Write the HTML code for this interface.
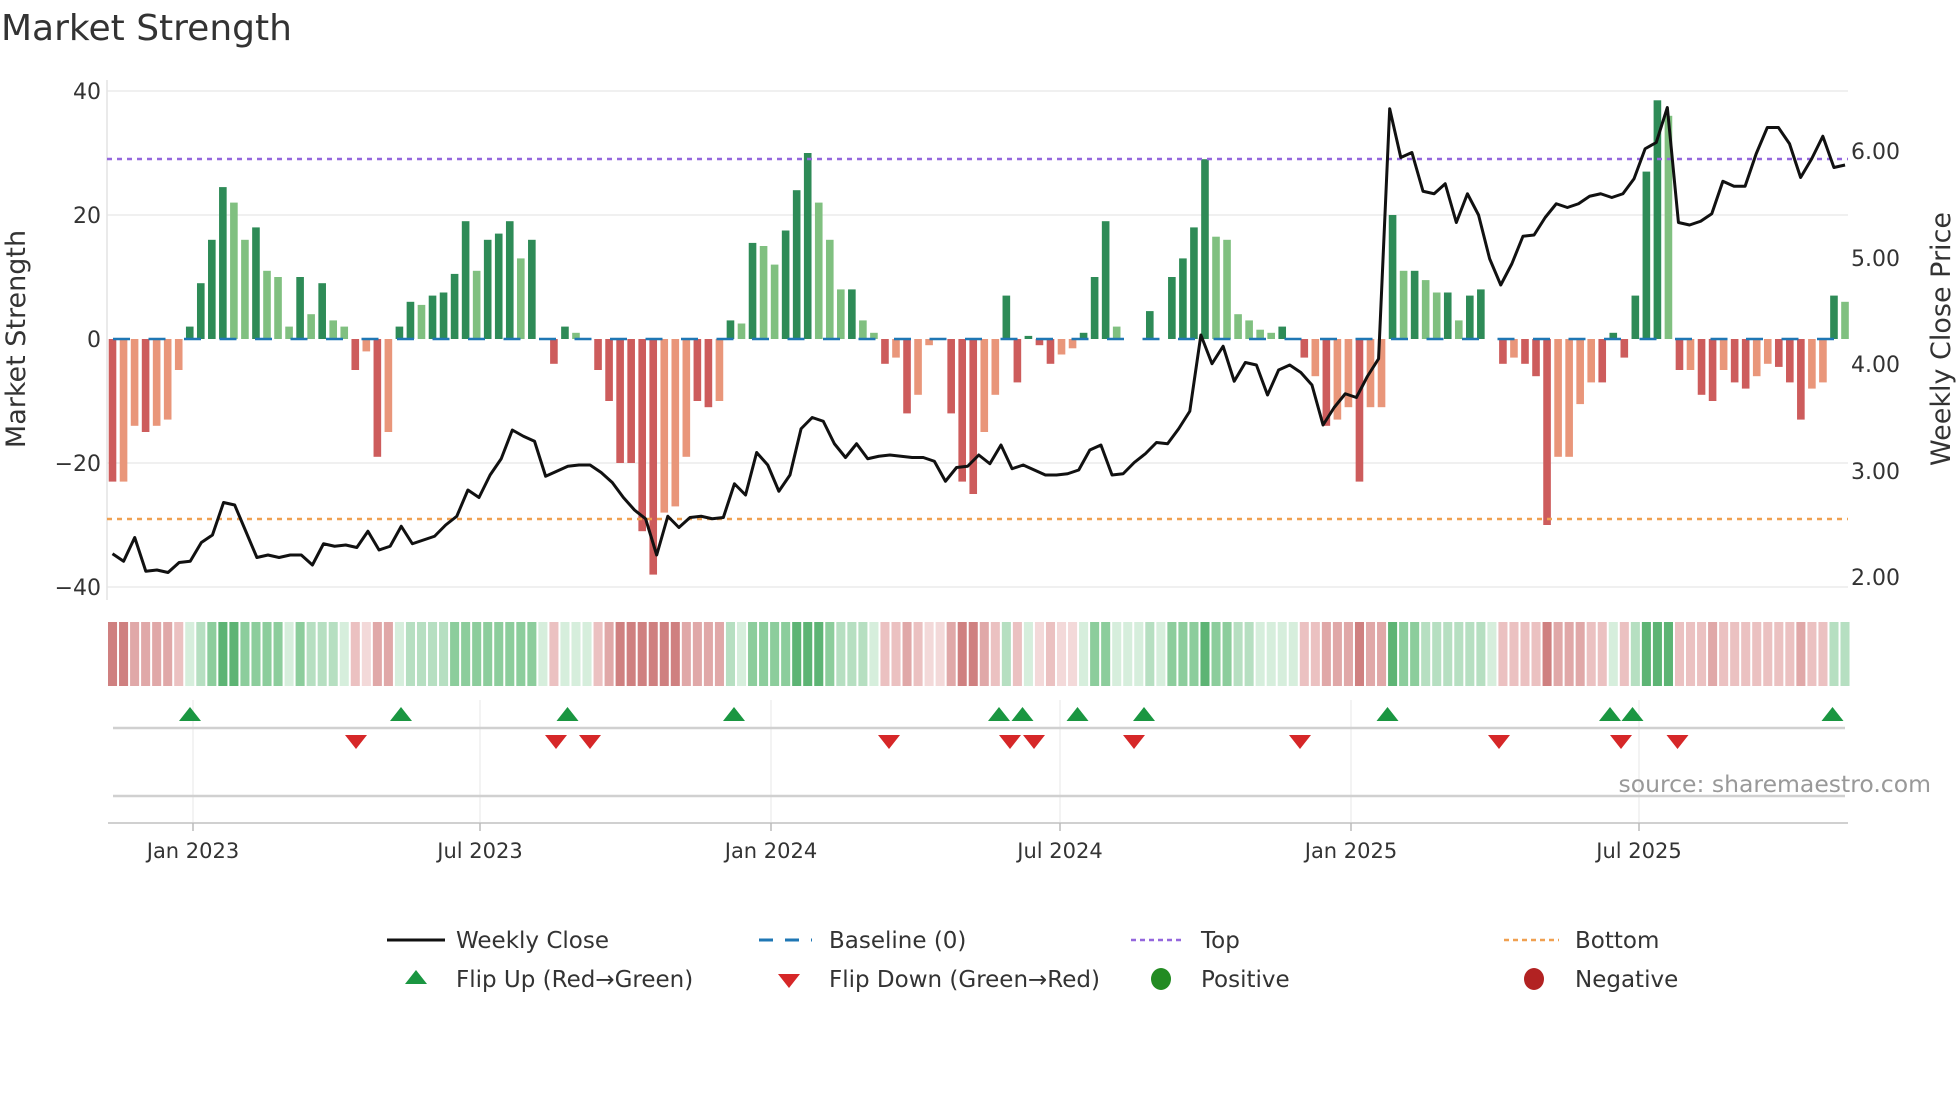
<!DOCTYPE html>
<html><head><meta charset="utf-8"><style>
html,body{margin:0;padding:0;background:#fff;}
svg{display:block;font-family:"DejaVu Sans","Liberation Sans",sans-serif;}
.a{fill:#2e8b57}.b{fill:#80c080}.c{fill:#cd5c5c}.e{fill:#e9967a}
.g1{fill:#d6eedc}.g2{fill:#b6dfc1}.g3{fill:#8ccd9c}.g4{fill:#5db474}
.r1{fill:#f3d9d9}.r2{fill:#ebc1c1}.r3{fill:#e0a8a8}.r4{fill:#cf8080}
</style></head><body>
<svg width="1960" height="1102" viewBox="0 0 1960 1102" xmlns="http://www.w3.org/2000/svg">
<defs>
<polygon id="up" points="0,-14 -11,0 11,0" fill="#1a9641"/>
<polygon id="dn" points="-11,0 11,0 0,14" fill="#d62728"/>
</defs>
<text x="1" y="40" font-size="36" fill="#333">Market Strength</text>
<g stroke="#ececec" stroke-width="1.5">
<line x1="107" y1="91" x2="1848" y2="91"/>
<line x1="107" y1="215" x2="1848" y2="215"/>
<line x1="107" y1="463" x2="1848" y2="463"/>
<line x1="107" y1="587" x2="1848" y2="587"/>
</g>
<line x1="107" y1="80" x2="107" y2="600" stroke="#e4e4e4" stroke-width="1.5"/>
<g font-size="22" fill="#333" text-anchor="end">
<text x="101" y="99">40</text><text x="101" y="223">20</text><text x="101" y="347">0</text>
<text x="101" y="471">−20</text><text x="101" y="595">−40</text>
</g>
<g font-size="22" fill="#333">
<text x="1851" y="159">6.00</text><text x="1851" y="266">5.00</text><text x="1851" y="372">4.00</text>
<text x="1851" y="479">3.00</text><text x="1851" y="585">2.00</text>
</g>
<text transform="translate(25,339) rotate(-90)" font-size="27" fill="#333" text-anchor="middle">Market Strength</text>
<text transform="translate(1950,339) rotate(-90)" font-size="27" fill="#333" text-anchor="middle">Weekly Close Price</text>

<g transform="translate(108.7,339) scale(11.035,-6.2)">
<rect x="0" y="-23" width="0.69" height="23" class="c"/>
<rect x="1" y="-23" width="0.69" height="23" class="e"/>
<rect x="2" y="-14" width="0.69" height="14" class="e"/>
<rect x="3" y="-15" width="0.69" height="15" class="c"/>
<rect x="4" y="-14" width="0.69" height="14" class="e"/>
<rect x="5" y="-13" width="0.69" height="13" class="e"/>
<rect x="6" y="-5" width="0.69" height="5" class="e"/>
<rect x="7" y="0" width="0.69" height="2" class="a"/>
<rect x="8" y="0" width="0.69" height="9" class="a"/>
<rect x="9" y="0" width="0.69" height="16" class="a"/>
<rect x="10" y="0" width="0.69" height="24.5" class="a"/>
<rect x="11" y="0" width="0.69" height="22" class="b"/>
<rect x="12" y="0" width="0.69" height="16" class="b"/>
<rect x="13" y="0" width="0.69" height="18" class="a"/>
<rect x="14" y="0" width="0.69" height="11" class="b"/>
<rect x="15" y="0" width="0.69" height="10" class="b"/>
<rect x="16" y="0" width="0.69" height="2" class="b"/>
<rect x="17" y="0" width="0.69" height="10" class="a"/>
<rect x="18" y="0" width="0.69" height="4" class="b"/>
<rect x="19" y="0" width="0.69" height="9" class="a"/>
<rect x="20" y="0" width="0.69" height="3" class="b"/>
<rect x="21" y="0" width="0.69" height="2" class="b"/>
<rect x="22" y="-5" width="0.69" height="5" class="c"/>
<rect x="23" y="-2" width="0.69" height="2" class="e"/>
<rect x="24" y="-19" width="0.69" height="19" class="c"/>
<rect x="25" y="-15" width="0.69" height="15" class="e"/>
<rect x="26" y="0" width="0.69" height="2" class="a"/>
<rect x="27" y="0" width="0.69" height="6" class="a"/>
<rect x="28" y="0" width="0.69" height="5.5" class="b"/>
<rect x="29" y="0" width="0.69" height="7" class="a"/>
<rect x="30" y="0" width="0.69" height="7.5" class="a"/>
<rect x="31" y="0" width="0.69" height="10.5" class="a"/>
<rect x="32" y="0" width="0.69" height="19" class="a"/>
<rect x="33" y="0" width="0.69" height="11" class="b"/>
<rect x="34" y="0" width="0.69" height="16" class="a"/>
<rect x="35" y="0" width="0.69" height="17" class="a"/>
<rect x="36" y="0" width="0.69" height="19" class="a"/>
<rect x="37" y="0" width="0.69" height="13" class="b"/>
<rect x="38" y="0" width="0.69" height="16" class="a"/>
<rect x="40" y="-4" width="0.69" height="4" class="c"/>
<rect x="41" y="0" width="0.69" height="2" class="a"/>
<rect x="42" y="0" width="0.69" height="1" class="b"/>
<rect x="44" y="-5" width="0.69" height="5" class="c"/>
<rect x="45" y="-10" width="0.69" height="10" class="c"/>
<rect x="46" y="-20" width="0.69" height="20" class="c"/>
<rect x="47" y="-20" width="0.69" height="20" class="c"/>
<rect x="48" y="-31" width="0.69" height="31" class="c"/>
<rect x="49" y="-38" width="0.69" height="38" class="c"/>
<rect x="50" y="-28" width="0.69" height="28" class="e"/>
<rect x="51" y="-27" width="0.69" height="27" class="e"/>
<rect x="52" y="-19" width="0.69" height="19" class="e"/>
<rect x="53" y="-10" width="0.69" height="10" class="c"/>
<rect x="54" y="-11" width="0.69" height="11" class="c"/>
<rect x="55" y="-10" width="0.69" height="10" class="e"/>
<rect x="56" y="0" width="0.69" height="3" class="a"/>
<rect x="57" y="0" width="0.69" height="2.5" class="b"/>
<rect x="58" y="0" width="0.69" height="15.5" class="a"/>
<rect x="59" y="0" width="0.69" height="15" class="b"/>
<rect x="60" y="0" width="0.69" height="12" class="b"/>
<rect x="61" y="0" width="0.69" height="17.5" class="a"/>
<rect x="62" y="0" width="0.69" height="24" class="a"/>
<rect x="63" y="0" width="0.69" height="30" class="a"/>
<rect x="64" y="0" width="0.69" height="22" class="b"/>
<rect x="65" y="0" width="0.69" height="16" class="b"/>
<rect x="66" y="0" width="0.69" height="8" class="b"/>
<rect x="67" y="0" width="0.69" height="8" class="a"/>
<rect x="68" y="0" width="0.69" height="3" class="b"/>
<rect x="69" y="0" width="0.69" height="1" class="b"/>
<rect x="70" y="-4" width="0.69" height="4" class="c"/>
<rect x="71" y="-3" width="0.69" height="3" class="e"/>
<rect x="72" y="-12" width="0.69" height="12" class="c"/>
<rect x="73" y="-9" width="0.69" height="9" class="e"/>
<rect x="74" y="-1" width="0.69" height="1" class="e"/>
<rect x="76" y="-12" width="0.69" height="12" class="c"/>
<rect x="77" y="-23" width="0.69" height="23" class="c"/>
<rect x="78" y="-25" width="0.69" height="25" class="c"/>
<rect x="79" y="-15" width="0.69" height="15" class="e"/>
<rect x="80" y="-9" width="0.69" height="9" class="e"/>
<rect x="81" y="0" width="0.69" height="7" class="a"/>
<rect x="82" y="-7" width="0.69" height="7" class="c"/>
<rect x="83" y="0" width="0.69" height="0.5" class="a"/>
<rect x="84" y="-1" width="0.69" height="1" class="c"/>
<rect x="85" y="-4" width="0.69" height="4" class="c"/>
<rect x="86" y="-2.5" width="0.69" height="2.5" class="e"/>
<rect x="87" y="-1.5" width="0.69" height="1.5" class="e"/>
<rect x="88" y="0" width="0.69" height="1" class="a"/>
<rect x="89" y="0" width="0.69" height="10" class="a"/>
<rect x="90" y="0" width="0.69" height="19" class="a"/>
<rect x="91" y="0" width="0.69" height="2" class="b"/>
<rect x="94" y="0" width="0.69" height="4.5" class="a"/>
<rect x="96" y="0" width="0.69" height="10" class="a"/>
<rect x="97" y="0" width="0.69" height="13" class="a"/>
<rect x="98" y="0" width="0.69" height="18" class="a"/>
<rect x="99" y="0" width="0.69" height="29" class="a"/>
<rect x="100" y="0" width="0.69" height="16.5" class="b"/>
<rect x="101" y="0" width="0.69" height="16" class="b"/>
<rect x="102" y="0" width="0.69" height="4" class="b"/>
<rect x="103" y="0" width="0.69" height="3" class="b"/>
<rect x="104" y="0" width="0.69" height="1.5" class="b"/>
<rect x="105" y="0" width="0.69" height="1" class="b"/>
<rect x="106" y="0" width="0.69" height="2" class="a"/>
<rect x="108" y="-3" width="0.69" height="3" class="c"/>
<rect x="109" y="-6" width="0.69" height="6" class="e"/>
<rect x="110" y="-14" width="0.69" height="14" class="c"/>
<rect x="111" y="-13" width="0.69" height="13" class="e"/>
<rect x="112" y="-11" width="0.69" height="11" class="e"/>
<rect x="113" y="-23" width="0.69" height="23" class="c"/>
<rect x="114" y="-11" width="0.69" height="11" class="e"/>
<rect x="115" y="-11" width="0.69" height="11" class="e"/>
<rect x="116" y="0" width="0.69" height="20" class="a"/>
<rect x="117" y="0" width="0.69" height="11" class="b"/>
<rect x="118" y="0" width="0.69" height="11" class="a"/>
<rect x="119" y="0" width="0.69" height="9.5" class="b"/>
<rect x="120" y="0" width="0.69" height="7.5" class="b"/>
<rect x="121" y="0" width="0.69" height="7.5" class="a"/>
<rect x="122" y="0" width="0.69" height="3" class="b"/>
<rect x="123" y="0" width="0.69" height="7" class="a"/>
<rect x="124" y="0" width="0.69" height="8" class="a"/>
<rect x="126" y="-4" width="0.69" height="4" class="c"/>
<rect x="127" y="-3" width="0.69" height="3" class="e"/>
<rect x="128" y="-4" width="0.69" height="4" class="c"/>
<rect x="129" y="-6" width="0.69" height="6" class="c"/>
<rect x="130" y="-30" width="0.69" height="30" class="c"/>
<rect x="131" y="-19" width="0.69" height="19" class="e"/>
<rect x="132" y="-19" width="0.69" height="19" class="e"/>
<rect x="133" y="-10.5" width="0.69" height="10.5" class="e"/>
<rect x="134" y="-7" width="0.69" height="7" class="e"/>
<rect x="135" y="-7" width="0.69" height="7" class="c"/>
<rect x="136" y="0" width="0.69" height="1" class="a"/>
<rect x="137" y="-3" width="0.69" height="3" class="c"/>
<rect x="138" y="0" width="0.69" height="7" class="a"/>
<rect x="139" y="0" width="0.69" height="27" class="a"/>
<rect x="140" y="0" width="0.69" height="38.5" class="a"/>
<rect x="141" y="0" width="0.69" height="36" class="b"/>
<rect x="142" y="-5" width="0.69" height="5" class="c"/>
<rect x="143" y="-5" width="0.69" height="5" class="e"/>
<rect x="144" y="-9" width="0.69" height="9" class="c"/>
<rect x="145" y="-10" width="0.69" height="10" class="c"/>
<rect x="146" y="-5" width="0.69" height="5" class="e"/>
<rect x="147" y="-7" width="0.69" height="7" class="c"/>
<rect x="148" y="-8" width="0.69" height="8" class="c"/>
<rect x="149" y="-6" width="0.69" height="6" class="e"/>
<rect x="150" y="-4" width="0.69" height="4" class="e"/>
<rect x="151" y="-4.5" width="0.69" height="4.5" class="c"/>
<rect x="152" y="-7" width="0.69" height="7" class="c"/>
<rect x="153" y="-13" width="0.69" height="13" class="c"/>
<rect x="154" y="-8" width="0.69" height="8" class="e"/>
<rect x="155" y="-7" width="0.69" height="7" class="e"/>
<rect x="156" y="0" width="0.69" height="7" class="a"/>
<rect x="157" y="0" width="0.69" height="6" class="b"/>
</g>

<line x1="107" y1="159" x2="1848" y2="159" stroke="#9467dd" stroke-width="2.5" stroke-dasharray="5,5"/>
<line x1="107" y1="519" x2="1848" y2="519" stroke="#f0a050" stroke-width="2.5" stroke-dasharray="5,5"/>
<line x1="113" y1="339" x2="1848" y2="339" stroke="#1f77b4" stroke-width="2.5" stroke-dasharray="17,18.5"/>

<g transform="translate(112.5,0) scale(11.106,1.25)">
<polyline fill="none" stroke="#111" stroke-width="3" stroke-linejoin="round" vector-effect="non-scaling-stroke" points="0,443 1,449 2,430 3,457 4,456 5,458 6,450 7,449 8,434 9,428 10,402 11,404 12,425 13,446 14,444 15,446 16,444 17,444 18,452 19,435 20,437 21,436 22,438 23,425 24,440 25,437 26,421 27,435 28,432 29,429 30,420 31,413 32,392 33,398 34,380 35,367 36,344 37,349 38,353 39,381 40,377 41,373 42,372 43,372 44,378 45,386 46,398 47,408 48,415 49,444 50,413 51,422 52,414 53,413 54,415 55,414 56,387 57,396 58,362 59,372 60,393 61,380 62,343 63,334 64,337 65,355 66,366 67,355 68,367 69,365 70,364 71,365 72,366 73,366 74,369 75,385 76,374 77,373 78,364 79,371 80,356 81,375 82,372 83,376 84,380 85,380 86,379 87,376 88,360 89,356 90,380 91,379 92,370 93,363 94,354 95,355 96,343 97,329 98,268 99,291 100,277 101,305 102,290 103,292 104,316 105,296 106,292 107,298 108,308 109,340 110,326 111,315 112,318 113,301 114,287 115,87 116,126 117,122 118,153 119,155 120,147 121,178 122,155 123,172 124,207 125,228 126,211 127,189 128,188 129,174 130,163 131,166 132,163 133,157 134,155 135,158 136,155 137,143 138,119 139,114 140,86 141,178 142,180 143,177 144,171 145,145 146,149 147,149 148,123 149,102 150,102 151,115 152,142 153,127 154,109 155,134 156,132"/>
</g>

<g transform="translate(108,622) scale(11.035,1)">
<rect x="0" width="0.82" height="64" class="r4"/><rect x="1" width="0.82" height="64" class="r4"/><rect x="2" width="0.82" height="64" class="r3"/><rect x="3" width="0.82" height="64" class="r3"/><rect x="4" width="0.82" height="64" class="r3"/><rect x="5" width="0.82" height="64" class="r3"/><rect x="6" width="0.82" height="64" class="r2"/><rect x="7" width="0.82" height="64" class="g1"/><rect x="8" width="0.82" height="64" class="g2"/><rect x="9" width="0.82" height="64" class="g3"/>
<rect x="10" width="0.82" height="64" class="g4"/><rect x="11" width="0.82" height="64" class="g4"/><rect x="12" width="0.82" height="64" class="g3"/><rect x="13" width="0.82" height="64" class="g3"/><rect x="14" width="0.82" height="64" class="g3"/><rect x="15" width="0.82" height="64" class="g3"/><rect x="16" width="0.82" height="64" class="g1"/><rect x="17" width="0.82" height="64" class="g3"/><rect x="18" width="0.82" height="64" class="g2"/><rect x="19" width="0.82" height="64" class="g2"/>
<rect x="20" width="0.82" height="64" class="g2"/><rect x="21" width="0.82" height="64" class="g1"/><rect x="22" width="0.82" height="64" class="r2"/><rect x="23" width="0.82" height="64" class="r1"/><rect x="24" width="0.82" height="64" class="r3"/><rect x="25" width="0.82" height="64" class="r3"/><rect x="26" width="0.82" height="64" class="g1"/><rect x="27" width="0.82" height="64" class="g2"/><rect x="28" width="0.82" height="64" class="g2"/><rect x="29" width="0.82" height="64" class="g2"/>
<rect x="30" width="0.82" height="64" class="g2"/><rect x="31" width="0.82" height="64" class="g3"/><rect x="32" width="0.82" height="64" class="g3"/><rect x="33" width="0.82" height="64" class="g3"/><rect x="34" width="0.82" height="64" class="g3"/><rect x="35" width="0.82" height="64" class="g3"/><rect x="36" width="0.82" height="64" class="g3"/><rect x="37" width="0.82" height="64" class="g3"/><rect x="38" width="0.82" height="64" class="g3"/><rect x="39" width="0.82" height="64" class="g1"/>
<rect x="40" width="0.82" height="64" class="r2"/><rect x="41" width="0.82" height="64" class="g1"/><rect x="42" width="0.82" height="64" class="g1"/><rect x="43" width="0.82" height="64" class="g1"/><rect x="44" width="0.82" height="64" class="r2"/><rect x="45" width="0.82" height="64" class="r3"/><rect x="46" width="0.82" height="64" class="r4"/><rect x="47" width="0.82" height="64" class="r4"/><rect x="48" width="0.82" height="64" class="r4"/><rect x="49" width="0.82" height="64" class="r4"/>
<rect x="50" width="0.82" height="64" class="r4"/><rect x="51" width="0.82" height="64" class="r4"/><rect x="52" width="0.82" height="64" class="r3"/><rect x="53" width="0.82" height="64" class="r3"/><rect x="54" width="0.82" height="64" class="r3"/><rect x="55" width="0.82" height="64" class="r3"/><rect x="56" width="0.82" height="64" class="g2"/><rect x="57" width="0.82" height="64" class="g1"/><rect x="58" width="0.82" height="64" class="g3"/><rect x="59" width="0.82" height="64" class="g3"/>
<rect x="60" width="0.82" height="64" class="g3"/><rect x="61" width="0.82" height="64" class="g3"/><rect x="62" width="0.82" height="64" class="g4"/><rect x="63" width="0.82" height="64" class="g4"/><rect x="64" width="0.82" height="64" class="g4"/><rect x="65" width="0.82" height="64" class="g3"/><rect x="66" width="0.82" height="64" class="g2"/><rect x="67" width="0.82" height="64" class="g2"/><rect x="68" width="0.82" height="64" class="g2"/><rect x="69" width="0.82" height="64" class="g1"/>
<rect x="70" width="0.82" height="64" class="r2"/><rect x="71" width="0.82" height="64" class="r2"/><rect x="72" width="0.82" height="64" class="r3"/><rect x="73" width="0.82" height="64" class="r2"/><rect x="74" width="0.82" height="64" class="r1"/><rect x="75" width="0.82" height="64" class="r1"/><rect x="76" width="0.82" height="64" class="r3"/><rect x="77" width="0.82" height="64" class="r4"/><rect x="78" width="0.82" height="64" class="r4"/><rect x="79" width="0.82" height="64" class="r3"/>
<rect x="80" width="0.82" height="64" class="r2"/><rect x="81" width="0.82" height="64" class="g2"/><rect x="82" width="0.82" height="64" class="r2"/><rect x="83" width="0.82" height="64" class="g1"/><rect x="84" width="0.82" height="64" class="r1"/><rect x="85" width="0.82" height="64" class="r2"/><rect x="86" width="0.82" height="64" class="r1"/><rect x="87" width="0.82" height="64" class="r1"/><rect x="88" width="0.82" height="64" class="g1"/><rect x="89" width="0.82" height="64" class="g3"/>
<rect x="90" width="0.82" height="64" class="g3"/><rect x="91" width="0.82" height="64" class="g1"/><rect x="92" width="0.82" height="64" class="g1"/><rect x="93" width="0.82" height="64" class="g1"/><rect x="94" width="0.82" height="64" class="g2"/><rect x="95" width="0.82" height="64" class="g1"/><rect x="96" width="0.82" height="64" class="g3"/><rect x="97" width="0.82" height="64" class="g3"/><rect x="98" width="0.82" height="64" class="g3"/><rect x="99" width="0.82" height="64" class="g4"/>
<rect x="100" width="0.82" height="64" class="g3"/><rect x="101" width="0.82" height="64" class="g3"/><rect x="102" width="0.82" height="64" class="g2"/><rect x="103" width="0.82" height="64" class="g2"/><rect x="104" width="0.82" height="64" class="g1"/><rect x="105" width="0.82" height="64" class="g1"/><rect x="106" width="0.82" height="64" class="g1"/><rect x="107" width="0.82" height="64" class="g1"/><rect x="108" width="0.82" height="64" class="r2"/><rect x="109" width="0.82" height="64" class="r2"/>
<rect x="110" width="0.82" height="64" class="r3"/><rect x="111" width="0.82" height="64" class="r3"/><rect x="112" width="0.82" height="64" class="r3"/><rect x="113" width="0.82" height="64" class="r4"/><rect x="114" width="0.82" height="64" class="r3"/><rect x="115" width="0.82" height="64" class="r3"/><rect x="116" width="0.82" height="64" class="g4"/><rect x="117" width="0.82" height="64" class="g3"/><rect x="118" width="0.82" height="64" class="g3"/><rect x="119" width="0.82" height="64" class="g2"/>
<rect x="120" width="0.82" height="64" class="g2"/><rect x="121" width="0.82" height="64" class="g2"/><rect x="122" width="0.82" height="64" class="g2"/><rect x="123" width="0.82" height="64" class="g2"/><rect x="124" width="0.82" height="64" class="g2"/><rect x="125" width="0.82" height="64" class="g1"/><rect x="126" width="0.82" height="64" class="r2"/><rect x="127" width="0.82" height="64" class="r2"/><rect x="128" width="0.82" height="64" class="r2"/><rect x="129" width="0.82" height="64" class="r2"/>
<rect x="130" width="0.82" height="64" class="r4"/><rect x="131" width="0.82" height="64" class="r3"/><rect x="132" width="0.82" height="64" class="r3"/><rect x="133" width="0.82" height="64" class="r3"/><rect x="134" width="0.82" height="64" class="r2"/><rect x="135" width="0.82" height="64" class="r2"/><rect x="136" width="0.82" height="64" class="g1"/><rect x="137" width="0.82" height="64" class="r2"/><rect x="138" width="0.82" height="64" class="g2"/><rect x="139" width="0.82" height="64" class="g4"/>
<rect x="140" width="0.82" height="64" class="g4"/><rect x="141" width="0.82" height="64" class="g4"/><rect x="142" width="0.82" height="64" class="r2"/><rect x="143" width="0.82" height="64" class="r2"/><rect x="144" width="0.82" height="64" class="r2"/><rect x="145" width="0.82" height="64" class="r3"/><rect x="146" width="0.82" height="64" class="r2"/><rect x="147" width="0.82" height="64" class="r2"/><rect x="148" width="0.82" height="64" class="r2"/><rect x="149" width="0.82" height="64" class="r2"/>
<rect x="150" width="0.82" height="64" class="r2"/><rect x="151" width="0.82" height="64" class="r2"/><rect x="152" width="0.82" height="64" class="r2"/><rect x="153" width="0.82" height="64" class="r3"/><rect x="154" width="0.82" height="64" class="r2"/><rect x="155" width="0.82" height="64" class="r2"/><rect x="156" width="0.82" height="64" class="g2"/><rect x="157" width="0.82" height="64" class="g2"/>
</g>

<g stroke="#efefef" stroke-width="1.5">
<line x1="193" y1="700" x2="193" y2="823"/><line x1="480" y1="700" x2="480" y2="823"/>
<line x1="771" y1="700" x2="771" y2="823"/><line x1="1060" y1="700" x2="1060" y2="823"/>
<line x1="1351" y1="700" x2="1351" y2="823"/><line x1="1639" y1="700" x2="1639" y2="823"/>
</g>
<line x1="113" y1="728" x2="1845" y2="728" stroke="#d0d0d0" stroke-width="2.5"/>
<line x1="113" y1="796" x2="1845" y2="796" stroke="#d0d0d0" stroke-width="2.5"/>
<line x1="108" y1="823" x2="1848" y2="823" stroke="#d0d0d0" stroke-width="2"/>
<g stroke="#bbb" stroke-width="1.5">
<line x1="193" y1="823" x2="193" y2="831"/><line x1="480" y1="823" x2="480" y2="831"/>
<line x1="771" y1="823" x2="771" y2="831"/><line x1="1060" y1="823" x2="1060" y2="831"/>
<line x1="1351" y1="823" x2="1351" y2="831"/><line x1="1639" y1="823" x2="1639" y2="831"/>
</g>
<use href="#up" x="190" y="721"/><use href="#up" x="401" y="721"/><use href="#up" x="567.5" y="721"/><use href="#up" x="734" y="721"/>
<use href="#up" x="999" y="721"/><use href="#up" x="1022.5" y="721"/><use href="#up" x="1077.5" y="721"/><use href="#up" x="1144" y="721"/>
<use href="#up" x="1387.5" y="721"/><use href="#up" x="1610" y="721"/><use href="#up" x="1632.5" y="721"/><use href="#up" x="1832.5" y="721"/>
<use href="#dn" x="356" y="735"/><use href="#dn" x="556" y="735"/><use href="#dn" x="590" y="735"/><use href="#dn" x="889" y="735"/>
<use href="#dn" x="1010" y="735"/><use href="#dn" x="1034" y="735"/><use href="#dn" x="1134" y="735"/><use href="#dn" x="1300" y="735"/>
<use href="#dn" x="1499" y="735"/><use href="#dn" x="1621" y="735"/><use href="#dn" x="1677.5" y="735"/>

<text x="1931" y="792" font-size="23.5" fill="#999" text-anchor="end">source: sharemaestro.com</text>
<g font-size="21" fill="#333" text-anchor="middle">
<text x="193" y="858">Jan 2023</text><text x="480" y="858">Jul 2023</text>
<text x="771" y="858">Jan 2024</text><text x="1060" y="858">Jul 2024</text>
<text x="1351" y="858">Jan 2025</text><text x="1639" y="858">Jul 2025</text>
</g>
<g font-size="23" fill="#333">
<line x1="387" y1="940" x2="445" y2="940" stroke="#111" stroke-width="3"/>
<text x="456" y="948">Weekly Close</text>
<line x1="759" y1="940" x2="812" y2="940" stroke="#1f77b4" stroke-width="3" stroke-dasharray="14,12"/>
<text x="829" y="948">Baseline (0)</text>
<line x1="1131" y1="940" x2="1185" y2="940" stroke="#9467dd" stroke-width="2.5" stroke-dasharray="5,4"/>
<text x="1201" y="948">Top</text>
<line x1="1504" y1="940" x2="1559" y2="940" stroke="#f0a050" stroke-width="2.5" stroke-dasharray="5,4"/>
<text x="1575" y="948">Bottom</text>
<polygon points="416,970 405,984 427,984" fill="#1a9641"/>
<text x="456" y="987">Flip Up (Red→Green)</text>
<polygon points="778,974 800,974 789,988" fill="#d62728"/>
<text x="829" y="987">Flip Down (Green→Red)</text>
<ellipse cx="1161" cy="979" rx="10" ry="11" fill="#228b22"/>
<text x="1201" y="987">Positive</text>
<ellipse cx="1534" cy="979" rx="10" ry="11" fill="#b22222"/>
<text x="1575" y="987">Negative</text>
</g>
</svg>
</body></html>
